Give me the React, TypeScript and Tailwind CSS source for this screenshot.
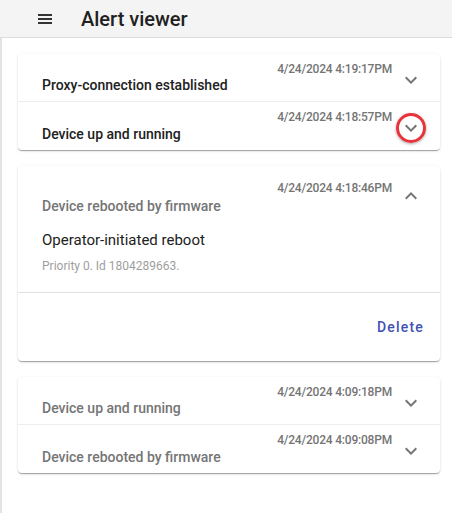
import React from 'react';

type Alert = {
  title: string;
  date: string;
  seen?: boolean;
  marked?: boolean;
};

const cardShadow =
  'shadow-[0_2px_1px_-1px_rgba(0,0,0,0.2),0_1px_1px_0_rgba(0,0,0,0.14),0_1px_3px_0_rgba(0,0,0,0.12)]';

function Chevron({ up = false }: { up?: boolean }) {
  return (
    <svg width="24" height="24" viewBox="0 0 24 24" className="fill-[#757575]">
      {up ? (
        <path d="M12 8l-6 6 1.41 1.41L12 10.83l4.59 4.58L18 14z" />
      ) : (
        <path d="M16.59 8.59L12 13.17 7.41 8.59 6 10l6 6 6-6z" />
      )}
    </svg>
  );
}

function AlertRow({ alert, last }: { alert: Alert; last?: boolean }) {
  return (
    <div
      className={[
        'flex h-[48px] items-stretch pl-[24px] pr-[17px]',
        last ? '' : 'border-b border-[#eeeeee]',
      ].join(' ')}
    >
      <div
        className={[
          'flex-1 self-end pb-[6px] text-[14px] leading-[20px] font-medium',
          alert.seen ? 'text-[#757575]' : 'text-[#212121]',
        ].join(' ')}
      >
        {alert.title}
      </div>
      <div className="self-start pt-[7px] text-[12px] leading-[16px] font-medium text-[#757575] tracking-[-0.2px]">
        {alert.date}
      </div>
      <div className="relative ml-[7px] flex items-center pt-[4px]">
        <Chevron />
        {alert.marked && (
          <span className="absolute left-1/2 top-1/2 h-[30px] w-[30px] -translate-x-1/2 -translate-y-[13px] rounded-full border-[3px] border-[#e8333b] shadow-[0_1px_3px_rgba(0,0,0,0.35)]" />
        )}
      </div>
    </div>
  );
}

export default function App() {
  const first: Alert[] = [
    { title: 'Proxy-connection established', date: '4/24/2024 4:19:17PM' },
    { title: 'Device up and running', date: '4/24/2024 4:18:57PM', marked: true },
  ];
  const older: Alert[] = [
    { title: 'Device up and running', date: '4/24/2024 4:09:18PM', seen: true },
    { title: 'Device rebooted by firmware', date: '4/24/2024 4:09:08PM', seen: true },
  ];

  return (
    <div className="min-h-[513px] w-[452px] bg-white font-['Roboto','Liberation_Sans',sans-serif]">
      <header className="flex h-[38px] items-center border-b border-[#dcdcdc] bg-[#f4f4f4]">
        <svg width="20" height="20" viewBox="0 0 20 20" className="ml-[35px] fill-[#333333]">
          <rect x="3" y="5" width="14" height="2" />
          <rect x="3" y="9" width="14" height="2" />
          <rect x="3" y="13" width="14" height="2" />
        </svg>
        <h1 className="ml-[26px] text-[20px] leading-[24px] font-medium text-[#212121]">Alert viewer</h1>
      </header>

      <main className="flex min-h-[475px] flex-col gap-[16px] border-l-2 border-[#e3e3e3] pt-[16px] pr-[12px] pl-[16px]">
        <section className={`rounded-[4px] bg-white ${cardShadow}`}>
          {first.map((a, i) => (
            <AlertRow key={a.date} alert={a} last={i === first.length - 1} />
          ))}
        </section>

        <section className={`rounded-[4px] bg-white ${cardShadow}`}>
          <div className="flex h-[56px] items-stretch pl-[24px] pr-[17px]">
            <div className="flex-1 self-end pb-[6px] text-[14px] leading-[20px] font-medium text-[#757575]">
              Device rebooted by firmware
            </div>
            <div className="self-start pt-[14px] text-[12px] leading-[16px] font-medium text-[#757575] tracking-[-0.2px]">
              4/24/2024 4:18:46PM
            </div>
            <div className="ml-[7px] flex items-center pt-[4px]">
              <Chevron up />
            </div>
          </div>
          <div className="px-[24px] pt-[6px] pb-[18px]">
            <p className="text-[15px] leading-[24px] text-[#212121]">Operator-initiated reboot</p>
            <p className="mt-[6px] text-[12px] leading-[16px] text-[#9e9e9e]">Priority 0. Id 1804289663.</p>
          </div>
          <div className="flex h-[69px] items-center justify-end border-t border-[#e0e0e0] pr-[16px]">
            <button
              type="button"
              className="text-[14px] leading-[20px] font-medium tracking-[1.2px] text-[#3f51b5]"
            >
              Delete
            </button>
          </div>
        </section>

        <section className={`rounded-[4px] bg-white ${cardShadow}`}>
          {older.map((a, i) => (
            <AlertRow key={a.date} alert={a} last={i === older.length - 1} />
          ))}
        </section>
      </main>
    </div>
  );
}
